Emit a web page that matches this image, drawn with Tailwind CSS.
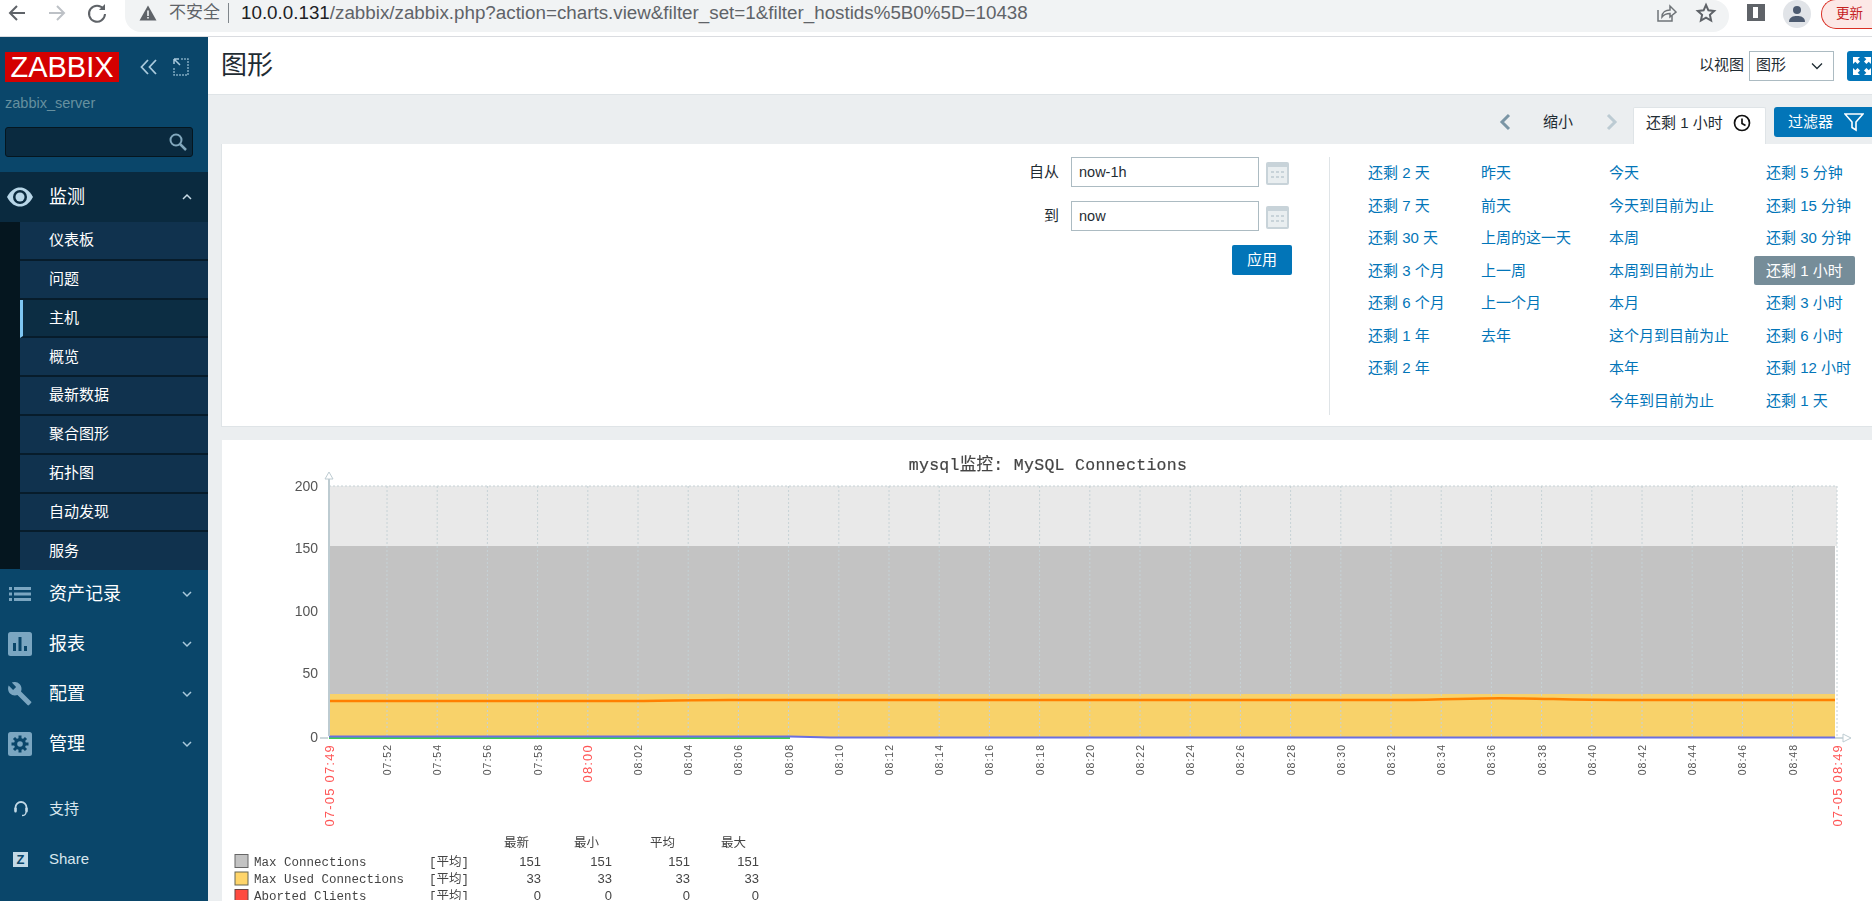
<!DOCTYPE html>
<html lang="en">
<head>
    <meta charset="UTF-8">
    <title>图形</title>
    <script src="https://cdn.jsdelivr.net/npm/@tailwindcss/browser@4"></script>
</head>
<body class="h-[909px] w-[1872px] overflow-hidden flex flex-col bg-white text-[15px] text-[#1f2c33] font-['Liberation_Sans','Noto_Sans_CJK_SC',sans-serif]">

    <!-- Browser toolbar -->
    <div class="h-[37px] shrink-0 flex items-start border-b border-[#dadce0] bg-white">
        <svg class="w-6 h-6 shrink-0 ml-[5px] mt-[1px]" viewBox="0 0 24 24" fill="none" stroke="#5f6368" stroke-width="2"><path d="M20 12H5M12 5l-7 7 7 7"/></svg>
        <svg class="w-6 h-6 shrink-0 ml-[16px] mt-[1px]" viewBox="0 0 24 24" fill="none" stroke="#bdc1c6" stroke-width="2"><path d="M4 12h15M12 5l7 7-7 7"/></svg>
        <svg class="w-6 h-6 shrink-0 ml-[16px] mt-[1px]" viewBox="0 0 24 24" fill="none" stroke="#5f6368" stroke-width="2"><path d="M18.5 8A8 8 0 1 0 20 13"/><path d="M20 3v6h-6" fill="#5f6368" stroke="none"/></svg>
        <div class="ml-[16px] w-[1604px] shrink-0 h-8 pb-[6px] rounded-b-[16px] rounded-r-[16px] bg-[#f1f3f4] flex items-center">
            <svg class="w-[18px] h-[18px] ml-[14px]" viewBox="0 0 18 18" fill="#5f6368"><path d="M9 1.5 17.5 16.5H.5Z"/><path d="M8.2 6.5h1.6v5.5H8.2zM8.2 13h1.6v1.6H8.2z" fill="#f1f3f4"/></svg>
            <span class="ml-[12px] text-[17px] text-[#5f6368]">不安全</span>
            <span class="ml-[8px] w-px h-5 bg-[#80868b]"></span>
            <span class="ml-[12px] text-[18.800px] text-[#5f6368] whitespace-nowrap"><span class="text-[#202124]">10.0.0.131</span>/zabbix/zabbix.php?action=charts.view&amp;filter_set=1&amp;filter_hostids%5B0%5D=10438</span>
            <svg class="w-[22px] h-[22px] ml-auto" viewBox="0 0 22 22" fill="none" stroke="#6f7478" stroke-width="1.5"><path d="M3 8v11h14v-5"/><path d="M7 15c0-5 4-7 8-7V4l6 6-6 5v-3.500c-4 0-6 1-8 3.500Z"/></svg>
            <svg class="w-[22px] h-[22px] ml-[18px] mr-[12px]" viewBox="0 0 22 22" fill="none" stroke="#5f6368" stroke-width="2"><path d="m11 3 2.400 5.300 5.800.6-4.300 3.900 1.200 5.700-5.100-2.900-5.100 2.900 1.200-5.700-4.300-3.900 5.800-.6Z"/></svg>
        </div>
        <div class="ml-[18px] mt-[4px] shrink-0 w-[18px] h-[17px] border-[3px] border-l-[6px] border-r-[7px] border-[#5f6368] bg-white"></div>
        <div class="ml-[18px] shrink-0 w-7 h-7 rounded-full bg-[#e1e4e8] overflow-hidden flex items-center justify-center">
            <svg class="w-[18px] h-[18px]" viewBox="0 0 18 18" fill="#4d5b70"><circle cx="9" cy="5" r="4"/><path d="M1 17c0-5 4-6 8-6s8 1 8 6Z"/></svg>
        </div>
        <div class="ml-[10px] shrink-0 w-[51px] h-[30px] -mt-[1px] rounded-l-[15px] border border-r-0 border-[#d93025] bg-[#fce8e6] pl-[14px] text-[13.500px] leading-[28px] text-[#c5221f] whitespace-nowrap">更新</div>
    </div>

    <div class="h-[864px] shrink-0 flex overflow-hidden">

        <!-- Sidebar -->
        <aside class="w-[208px] shrink-0 bg-[#0a466a] flex flex-col">
            <div class="h-[42px] mt-[15px] flex items-start">
                <div class="ml-[5px] w-[114px] h-[30px] bg-[#d40000] text-white text-[29px] leading-[30px] text-center">ZABBIX</div>
                <svg class="w-5 h-5 ml-[20px] mt-[5px]" viewBox="0 0 20 20" fill="none" stroke="#a9c9dc" stroke-width="1.800"><path d="M9 3 2.500 10 9 17M17 3l-6.500 7 6.500 7"/></svg>
                <svg class="w-4 h-5 ml-[14px] mt-[5px]" viewBox="0 0 16 20" fill="none" stroke="#7ea8c0" stroke-width="1.500" stroke-dasharray="2 1"><path d="M8 2h7v16H1v-8"/><path d="M1 2h5M1 2v5M1.500 2.500 7 8" stroke-dasharray="none" stroke="#a9c9dc"/></svg>
            </div>
            <div class="ml-[5px] h-[24px] -mt-[3px] leading-[24px] text-[14.500px] text-[#66909f]">zabbix_server</div>
            <div class="ml-[5px] mt-[12px] w-[188px] h-[30px] rounded-[3px] border border-[#05161f] bg-[#0a2a3f] flex items-center justify-end pr-[4px]">
                <svg class="w-5 h-5" viewBox="0 0 20 20" fill="none" stroke="#82a8bd" stroke-width="2"><circle cx="8" cy="8" r="5.500"/><path d="m12 12 6 6" stroke-width="2.500"/></svg>
            </div>
            <nav class="mt-[15px] flex flex-col">
                <div class="h-[50px] bg-[#0a2a3f] flex items-center text-white">
                    <svg class="w-[28px] h-[28px] ml-[6px]" viewBox="0 0 28 28"><path d="M1 14C5 7 9 4.500 14 4.500S23 7 27 14c-4 7-8 9.500-13 9.500S5 21 1 14Z" fill="#b8d6e8"/><circle cx="14" cy="14" r="7" fill="#0a2a3f"/><circle cx="14" cy="14" r="4.500" fill="#b8d6e8"/></svg>
                    <span class="ml-[15px] text-[18px]">监测</span>
                    <svg class="w-3 h-3 ml-auto mr-[15px]" viewBox="0 0 12 12" fill="none" stroke="#c9dbe6" stroke-width="1.500"><path d="m2 8 4-4 4 4"/></svg>
                </div>
                <div class="bg-[#05161f] pl-[20px] h-[347px] flex flex-col text-white">
                    <a class="h-[38.800px] shrink-0 pl-[29px] flex items-center bg-[#10324e] border-b-2 border-[#071c2b]">仪表板</a>
                    <a class="h-[38.800px] shrink-0 pl-[29px] flex items-center bg-[#10324e] border-b-2 border-[#071c2b]">问题</a>
                    <a class="h-[38.800px] shrink-0 pl-[26px] flex items-center bg-[#0c2d43] border-b-2 border-[#071c2b] border-l-[3px] border-l-[#7fc6f2]">主机</a>
                    <a class="h-[38.800px] shrink-0 pl-[29px] flex items-center bg-[#10324e] border-b-2 border-[#071c2b]">概览</a>
                    <a class="h-[38.800px] shrink-0 pl-[29px] flex items-center bg-[#10324e] border-b-2 border-[#071c2b]">最新数据</a>
                    <a class="h-[38.800px] shrink-0 pl-[29px] flex items-center bg-[#10324e] border-b-2 border-[#071c2b]">聚合图形</a>
                    <a class="h-[38.800px] shrink-0 pl-[29px] flex items-center bg-[#10324e] border-b-2 border-[#071c2b]">拓扑图</a>
                    <a class="h-[38.800px] shrink-0 pl-[29px] flex items-center bg-[#10324e] border-b-2 border-[#071c2b]">自动发现</a>
                    <a class="h-[38px] shrink-0 pl-[29px] flex items-center bg-[#10324e]">服务</a>
                </div>
                <div class="h-[50px] flex items-center text-white">
                    <svg class="w-6 h-6 ml-[8px]" viewBox="0 0 24 24" fill="#7ba6c1"><path d="M1 5h3v3H1zM6 5h17v3H6zM1 10.500h3v3H1zM6 10.500h17v3H6zM1 16h3v3H1zM6 16h17v3H6z"/></svg>
                    <span class="ml-[17px] text-[18px]">资产记录</span>
                    <svg class="w-3 h-3 ml-auto mr-[15px]" viewBox="0 0 12 12" fill="none" stroke="#a9c9dc" stroke-width="1.500"><path d="m2 4 4 4 4-4"/></svg>
                </div>
                <div class="h-[50px] flex items-center text-white">
                    <svg class="w-6 h-6 ml-[8px]" viewBox="0 0 24 24"><rect width="24" height="24" rx="2.500" fill="#7ba6c1"/><path d="M5 11h3v8H5zM10.500 5h3v14h-3zM16 14h3v5h-3z" fill="#0a466a"/></svg>
                    <span class="ml-[17px] text-[18px]">报表</span>
                    <svg class="w-3 h-3 ml-auto mr-[15px]" viewBox="0 0 12 12" fill="none" stroke="#a9c9dc" stroke-width="1.500"><path d="m2 4 4 4 4-4"/></svg>
                </div>
                <div class="h-[50px] flex items-center text-white">
                    <svg class="w-6 h-6 ml-[8px]" viewBox="0 0 24 24" fill="#7ba6c1"><path d="M23 19.500 13 9.500c1-2.500.5-5.500-1.500-7.500C9.300-.2 6.200-.5 3.800.6l4.300 4.300-3 3-4.400-4.300C-.5 6.100 0 9.300 2 11.500c2 2 5 2.500 7.500 1.500l10 10c.5.500 1.100.500 1.600 0l1.900-1.900c.5-.5.5-1.200 0-1.600Z"/></svg>
                    <span class="ml-[17px] text-[18px]">配置</span>
                    <svg class="w-3 h-3 ml-auto mr-[15px]" viewBox="0 0 12 12" fill="none" stroke="#a9c9dc" stroke-width="1.500"><path d="m2 4 4 4 4-4"/></svg>
                </div>
                <div class="h-[50px] flex items-center text-white">
                    <svg class="w-6 h-6 ml-[8px]" viewBox="0 0 24 24"><rect width="24" height="24" rx="2.500" fill="#7ba6c1"/><circle cx="12" cy="12" r="6" fill="#0a466a"/><circle cx="12" cy="12" r="2.800" fill="#7ba6c1"/><path d="M12 3.500v3.500M12 17v3.500M3.500 12H7M17 12h3.500M6 6l2.500 2.500M15.500 15.500 18 18M6 18l2.500-2.500M15.500 8.500 18 6" stroke="#0a466a" stroke-width="3"/></svg>
                    <span class="ml-[17px] text-[18px]">管理</span>
                    <svg class="w-3 h-3 ml-auto mr-[15px]" viewBox="0 0 12 12" fill="none" stroke="#a9c9dc" stroke-width="1.500"><path d="m2 4 4 4 4-4"/></svg>
                </div>
                <div class="h-[50px] mt-[15px] flex items-center text-[#d8e6ee]">
                    <svg class="w-[14px] h-[16px] ml-[14px]" viewBox="0 0 14 16" fill="none" stroke="#c3d9e6" stroke-width="1.800"><path d="M1.500 10V6.500a5.500 5.500 0 0 1 11 0V10"/><path d="M12 11c0 2.500-1.500 3.500-4 3.500" stroke-width="1.300"/><rect x=".3" y="6.500" width="2.400" height="5" rx="1" fill="#c3d9e6" stroke="none"/><rect x="11.300" y="6.500" width="2.400" height="5" rx="1" fill="#c3d9e6" stroke="none"/></svg>
                    <span class="ml-[21px]">支持</span>
                </div>
                <div class="h-[50px] flex items-center text-[#d8e6ee]">
                    <span class="ml-[13px] w-[15px] h-[15px] bg-[#c3d9e6] text-[#0a466a] text-[13px] leading-[15px] font-bold text-center">Z</span>
                    <span class="ml-[21px]">Share</span>
                </div>
            </nav>
        </aside>

        <!-- Main content -->
        <main class="flex-1 min-w-0 bg-[#ebeef0] flex flex-col">
            <header class="h-[58px] shrink-0 bg-white border-b border-[#dfe4e7] flex items-center pl-[13px]">
                <h1 class="text-[26px]">图形</h1>
                <span class="ml-auto">以视图</span>
                <div class="ml-[5px] w-[85px] h-[30px] border border-[#acbbc2] flex items-center pl-[6px] justify-between pr-[10px]">
                    <span>图形</span>
                    <svg class="w-3 h-3" viewBox="0 0 12 12" fill="none" stroke="#1f2c33" stroke-width="1.300"><path d="m1 3.500 5 5 5-5"/></svg>
                </div>
                <div class="ml-[13px] w-[25px] h-[30px] rounded-l-[3px] bg-[#0275b8] flex items-center pl-[5px]">
                    <svg class="w-[20px] h-[20px] shrink-0" viewBox="0 0 20 20" fill="white"><path d="M1 1h7L5.700 3.300 8 5.600 5.600 8 3.300 5.700 1 8ZM19 1v7l-2.300-2.300L14.400 8 12 5.600l2.300-2.300L12 1ZM1 19v-7l2.300 2.300L5.600 12 8 14.400l-2.300 2.300L8 19ZM19 19h-7l2.300-2.300-2.300-2.300 2.400-2.400 2.300 2.300L19 12Z"/></svg>
                </div>
            </header>

            <div class="h-[49px] shrink-0 flex items-start justify-end pt-[12px]">
                <svg class="w-5 h-5 mt-[5px] mr-[27px]" viewBox="0 0 20 20" fill="none" stroke="#7a95a5" stroke-width="3"><path d="m13 3-7 7 7 7"/></svg>
                <span class="leading-[30px] w-[30px] whitespace-nowrap">缩小</span>
                <svg class="w-5 h-5 mt-[5px] ml-[28px] mr-[12px]" viewBox="0 0 20 20" fill="none" stroke="#bccbd3" stroke-width="3"><path d="m7 3 7 7-7 7"/></svg>
                <div class="w-[133px] h-[37px] bg-white border border-b-0 border-[#dfe4e7] rounded-t-[2px] flex items-start pl-[12px] pt-[1px] leading-[28px]">
                    <span class="whitespace-nowrap">还剩 1 小时</span>
                    <svg class="w-[18px] h-[18px] ml-[10px] mt-[5px] shrink-0" viewBox="0 0 18 18" fill="none" stroke="#111" stroke-width="1.700"><circle cx="9" cy="9" r="7.500"/><path d="M9 4.500V9.500l3.500 2"/></svg>
                </div>
                <div class="ml-[8px] w-[98px] h-[30px] rounded-l-[3px] bg-[#0275b8] text-white flex items-center pl-[14px]">
                    <span class="whitespace-nowrap">过滤器</span>
                    <svg class="w-5 h-5 ml-[11px] shrink-0" viewBox="0 0 20 20" fill="none" stroke="white" stroke-width="1.600"><path d="M1 2h18l-7 8v8l-4-2.500V10Z"/></svg>
                </div>
            </div>

            <!-- Time filter panel -->
            <section class="h-[283px] shrink-0 ml-[13px] bg-white border border-t-0 border-r-0 border-[#dfe4e7] flex pt-[13px]">
                <div class="w-[1107px] shrink-0 flex flex-col items-end pr-[37px]">
                    <div class="h-[30px] flex items-center">
                        <span>自从</span>
                        <div class="ml-[12px] w-[188px] h-[30px] border border-[#acbbc2] pl-[7px] leading-[28px] text-[14.500px]">now-1h</div>
                        <svg class="ml-[7px] w-[23px] h-[23px] mt-[3px] mr-[3px]" viewBox="0 0 23 23"><rect width="23" height="23" rx="2" fill="#c8d3d9"/><rect x="2" y="5" width="19" height="16" fill="#e9eef0"/><path d="M5 9h3v2H5zM10 9h3v2h-3zM15 9h3v2h-3zM5 14h3v2H5zM10 14h3v2h-3zM15 14h3v2h-3z" fill="#c8d3d9"/></svg>
                    </div>
                    <div class="mt-[14px] h-[30px] flex items-center">
                        <span>到</span>
                        <div class="ml-[12px] w-[188px] h-[30px] border border-[#acbbc2] pl-[7px] leading-[28px] text-[14.500px]">now</div>
                        <svg class="ml-[7px] w-[23px] h-[23px] mt-[3px] mr-[3px]" viewBox="0 0 23 23"><rect width="23" height="23" rx="2" fill="#c8d3d9"/><rect x="2" y="5" width="19" height="16" fill="#e9eef0"/><path d="M5 9h3v2H5zM10 9h3v2h-3zM15 9h3v2h-3zM5 14h3v2H5zM10 14h3v2h-3zM15 14h3v2h-3z" fill="#c8d3d9"/></svg>
                    </div>
                    <div class="mt-[14px] w-[60px] h-[30px] rounded-[2px] bg-[#0275b8] text-white text-center leading-[30px]">应用</div>
                </div>
                <div class="h-[258px] border-l border-[#dfe4e7] pl-[38px] flex-1 grid grid-cols-[113px_128px_157px_1fr] text-[#0275b8] leading-[32.500px] whitespace-nowrap">
                    <div class="flex flex-col">
                        <a>还剩 2 天</a><a>还剩 7 天</a><a>还剩 30 天</a><a>还剩 3 个月</a><a>还剩 6 个月</a><a>还剩 1 年</a><a>还剩 2 年</a>
                    </div>
                    <div class="flex flex-col">
                        <a>昨天</a><a>前天</a><a>上周的这一天</a><a>上一周</a><a>上一个月</a><a>去年</a>
                    </div>
                    <div class="flex flex-col">
                        <a>今天</a><a>今天到目前为止</a><a>本周</a><a>本周到目前为止</a><a>本月</a><a>这个月到目前为止</a><a>本年</a><a>今年到目前为止</a>
                    </div>
                    <div class="flex flex-col items-start">
                        <a>还剩 5 分钟</a><a>还剩 15 分钟</a><a>还剩 30 分钟</a>
                        <a class="-ml-[12px] w-[101px] pl-[12px] h-[29px] my-[1.750px] leading-[29px] rounded-[2px] bg-[#768d99] text-white">还剩 1 小时</a>
                        <a>还剩 3 小时</a><a>还剩 6 小时</a><a>还剩 12 小时</a><a>还剩 1 天</a>
                    </div>
                </div>
            </section>

            <!-- Graph -->
            <section class="mt-[13px] ml-[14px] flex-1 bg-white overflow-hidden">
                <svg id="chart" class="block blur-[0.35px]" width="1650" height="460" viewBox="222 441 1650 460">
                    <rect x="329" y="487" width="1508" height="60" fill="#e9e9e9"/>
                    <rect x="329" y="547" width="1506" height="148" fill="#c3c3c3"/>
                    <rect x="329" y="695" width="1506" height="43" fill="#f8d26a"/>
                    <g id="grid" stroke="#c6d2d6" stroke-dasharray="2 2"></g>
                    <path d="M329 487H1837V738" fill="none" stroke="#c6d2d6" stroke-dasharray="2 2"/>
                    <path d="M329 702H620C660 702 690 701 730 701H1400C1450 700.500 1470 699.300 1500 699.300C1540 699.300 1570 701 1620 701H1835" fill="none" stroke="#ff8000" stroke-width="2.500"/>
                    <path d="M329 739H790" stroke="#3ecf4e" stroke-width="2"/>
                    <path d="M329 737.500H790L830 738.500H1835" fill="none" stroke="#6a6ee0" stroke-width="2"/>
                    <path d="M329 478V737" fill="none" stroke="#bdcbd1" stroke-width="2"/>
                    <path d="M1835 739H1843M320 739H328" fill="none" stroke="#bdcbd1" stroke-width="1.500"/>
                    <path d="M329 473l-4 7h8ZM1851 739l-8-4v8Z" fill="white" stroke="#bdcbd1"/>
                    <g font-family="'Liberation Sans',sans-serif" font-size="14" fill="#555" text-anchor="end">
                        <text x="318" y="492">200</text>
                        <text x="318" y="554">150</text>
                        <text x="318" y="617">100</text>
                        <text x="318" y="679">50</text>
                        <text x="318" y="743">0</text>
                    </g>
                    <text x="1048" y="471" text-anchor="middle" font-family="'Liberation Mono','Noto Sans CJK SC',monospace" font-size="16.500" letter-spacing="0.300" stroke="#444" stroke-width="0.200" fill="#444" xml:space="preserve">mysql监控: MySQL Connections</text>
                    <g id="ticks" font-family="'Liberation Sans',sans-serif" font-size="10.500" letter-spacing="1" fill="#555" text-anchor="end"></g>
                    <g font-family="'Liberation Sans',sans-serif" font-size="13" letter-spacing="1.200" fill="#f55" text-anchor="end">
                        <text transform="translate(334 745) rotate(-90)">07-05 07:49</text>
                        <text transform="translate(1842 745) rotate(-90)">07-05 08:49</text>
                        <text transform="translate(592 745) rotate(-90)">08:00</text>
                    </g>
                    <g font-family="'Liberation Mono','Noto Sans CJK SC',monospace" font-size="12.500" fill="#444">
                        <text x="504" y="848">最新</text><text x="574" y="848">最小</text><text x="650" y="848">平均</text><text x="721" y="848">最大</text>
                        <text x="254" y="867">Max Connections</text><text x="429" y="867">[平均]</text>
                        <text x="254" y="884">Max Used Connections</text><text x="429" y="884">[平均]</text>
                        <text x="254" y="901">Aborted Clients</text><text x="429" y="901">[平均]</text>
                    </g>
                    <g font-family="'Liberation Sans',sans-serif" font-size="13" fill="#444" text-anchor="end">
                        <text x="541" y="867">151</text><text x="612" y="867">151</text><text x="690" y="867">151</text><text x="759" y="867">151</text>
                        <text x="541" y="884">33</text><text x="612" y="884">33</text><text x="690" y="884">33</text><text x="759" y="884">33</text>
                        <text x="541" y="901">0</text><text x="612" y="901">0</text><text x="690" y="901">0</text><text x="759" y="901">0</text>
                    </g>
                    <rect x="235" y="855.500" width="13" height="13" fill="#c3c3c3" stroke="#666"/>
                    <rect x="235" y="873" width="13" height="13" fill="#ffd56a" stroke="#665"/>
                    <rect x="235" y="890.500" width="13" height="13" fill="#ff4a40" stroke="#644"/>
                </svg>
            </section>
        </main>
    </div>

    <script>
        // vertical grid lines and time labels, one every 2 minutes
        const grid = document.getElementById('grid');
        const ticks = document.getElementById('ticks');
        const ns = 'http://www.w3.org/2000/svg';
        for (let i = 0; i < 29; i++) {
            const x = 387 + 50.2 * i;
            const line = document.createElementNS(ns, 'line');
            line.setAttribute('x1', x); line.setAttribute('x2', x);
            line.setAttribute('y1', 487); line.setAttribute('y2', 738);
            grid.appendChild(line);
            const total = 7 * 60 + 52 + i * 2;
            if (total === 480) continue;
            const label = String(Math.floor(total / 60)).padStart(2, '0') + ':' + String(total % 60).padStart(2, '0');
            const t = document.createElementNS(ns, 'text');
            t.setAttribute('transform', `translate(${x + 4} 745) rotate(-90)`);
            t.textContent = label;
            ticks.appendChild(t);
        }
    </script>
</body>
</html>
